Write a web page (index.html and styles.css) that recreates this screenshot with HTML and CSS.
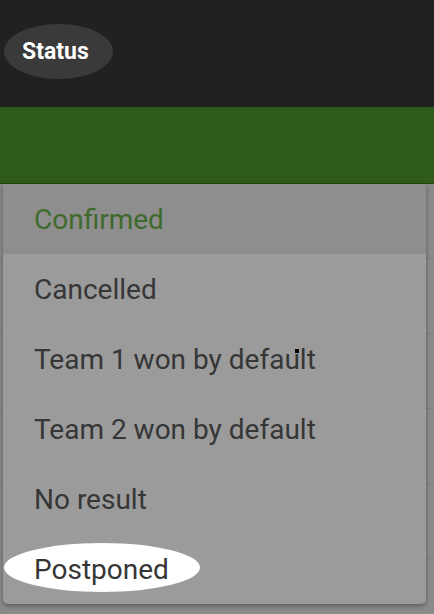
FILE: index.html
```html
<!DOCTYPE html>
<html>
<head>
<meta charset="utf-8">
<link rel="stylesheet" href="styles.css">
</head>
<body>
<header class="topbar">
  <span class="title">Status</span>
</header>
<div class="greenbar"></div>
<main class="page">
  <div class="row"></div>
  <div class="row"></div>
  <div class="row"></div>
  <div class="row"></div>
  <div class="row"></div>
</main>
<ul class="menu">
  <li class="item selected">Confirmed</li>
  <li class="item">Cancelled</li>
  <li class="item">Team 1 won by defa<span class="dotted">u</span>lt</li>
  <li class="item">Team 2 won by default</li>
  <li class="item">No result</li>
  <li class="item marked">Postponed</li>
</ul>
</body>
</html>
```
FILE: styles.css
```css
html, body {
  margin: 0;
  padding: 0;
  width: 434px;
  height: 614px;
  overflow: hidden;
  background: #8b8b8b;
  font-family: Roboto, "Liberation Sans", sans-serif;
}
.topbar {
  height: 107px;
  background: #212121;
  display: flex;
  align-items: center;
  padding-left: 22px;
  box-sizing: border-box;
}
.title {
  position: relative;
  z-index: 0;
  color: #ffffff;
  font-weight: 700;
  font-size: 23px;
  margin-top: -4px;
}
.title::before {
  content: "";
  position: absolute;
  left: -18px;
  top: -14px;
  width: 109px;
  height: 55px;
  border-radius: 50%;
  background: #3a3a3a;
  z-index: -1;
}
.greenbar {
  height: 77px;
  background: #2e5b1a;
  border-bottom: 1px solid #23450f;
  box-sizing: border-box;
}
.page {
  display: flex;
  flex-direction: column;
}
.row {
  height: 74px;
  border-bottom: 1px solid #7f7f7f;
}
.menu {
  position: absolute;
  left: 3px;
  top: 184px;
  width: 423px;
  margin: 0;
  padding: 0;
  list-style: none;
  background: #9b9b9b;
  border-radius: 0 0 5px 5px;
  box-shadow: 0 2px 5px rgba(0,0,0,0.35);
}
.item {
  height: 70px;
  display: flex;
  align-items: center;
  padding-left: 31px;
  font-size: 28px;
  color: #363636;
}
.item.selected {
  background: #8e8e8e;
  color: #3f6a2c;
}
.item.marked {
  position: relative;
  z-index: 0;
}
.item.marked::before {
  content: "";
  position: absolute;
  left: 1px;
  top: 9px;
  width: 196px;
  height: 49px;
  border-radius: 50%;
  background: #ffffff;
  z-index: -1;
}
.dotted {
  position: relative;
}
.dotted::after {
  content: "";
  position: absolute;
  right: 1px;
  top: 6px;
  width: 4px;
  height: 4px;
  background: #000;
}
```
